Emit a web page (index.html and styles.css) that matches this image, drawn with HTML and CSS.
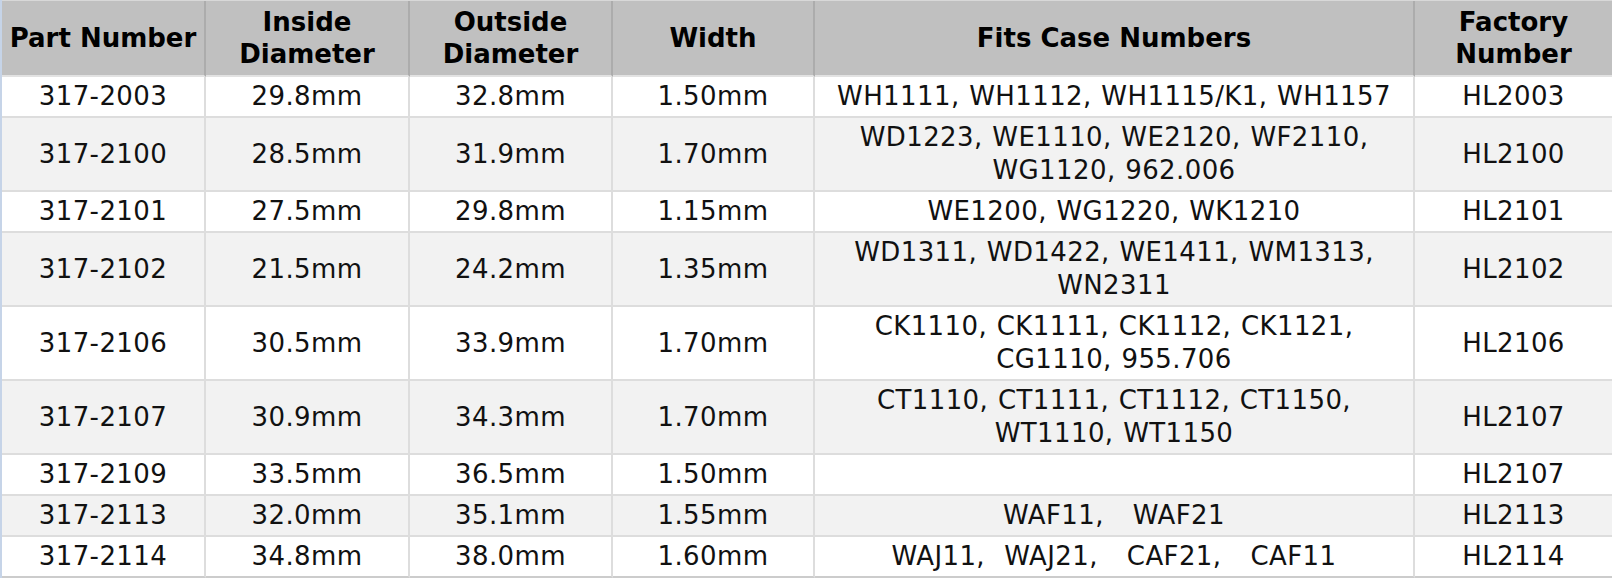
FILE: index.html
```html
<!DOCTYPE html>
<html>
<head>
<meta charset="utf-8">
<link rel="stylesheet" href="styles.css">
</head>
<body>
<div class="frame">
<table class="parts">
  <thead>
    <tr>
      <th class="c1">Part Number</th>
      <th class="c2">Inside<br>Diameter</th>
      <th class="c3">Outside<br>Diameter</th>
      <th class="c4">Width</th>
      <th class="c5">Fits Case Numbers</th>
      <th class="c6">Factory<br>Number</th>
    </tr>
  </thead>
  <tbody>
    <tr><td>317-2003</td><td>29.8mm</td><td>32.8mm</td><td>1.50mm</td><td>WH1111, WH1112, WH1115/K1, WH1157</td><td>HL2003</td></tr>
    <tr><td>317-2100</td><td>28.5mm</td><td>31.9mm</td><td>1.70mm</td><td>WD1223, WE1110, WE2120, WF2110,<br>WG1120, 962.006</td><td>HL2100</td></tr>
    <tr><td>317-2101</td><td>27.5mm</td><td>29.8mm</td><td>1.15mm</td><td>WE1200, WG1220, WK1210</td><td>HL2101</td></tr>
    <tr><td>317-2102</td><td>21.5mm</td><td>24.2mm</td><td>1.35mm</td><td>WD1311, WD1422, WE1411, WM1313,<br>WN2311</td><td>HL2102</td></tr>
    <tr><td>317-2106</td><td>30.5mm</td><td>33.9mm</td><td>1.70mm</td><td>CK1110, CK1111, CK1112, CK1121,<br>CG1110, 955.706</td><td>HL2106</td></tr>
    <tr><td>317-2107</td><td>30.9mm</td><td>34.3mm</td><td>1.70mm</td><td>CT1110, CT1111, CT1112, CT1150,<br>WT1110, WT1150</td><td>HL2107</td></tr>
    <tr><td>317-2109</td><td>33.5mm</td><td>36.5mm</td><td>1.50mm</td><td></td><td>HL2107</td></tr>
    <tr><td>317-2113</td><td>32.0mm</td><td>35.1mm</td><td>1.55mm</td><td>WAF11,&nbsp;&nbsp; WAF21</td><td>HL2113</td></tr>
    <tr><td>317-2114</td><td>34.8mm</td><td>38.0mm</td><td>1.60mm</td><td>WAJ11,&nbsp; WAJ21,&nbsp;&nbsp; CAF21,&nbsp;&nbsp; CAF11</td><td>HL2114</td></tr>
  </tbody>
</table>
</div>
</body>
</html>
```

FILE: styles.css
```css
html, body {
  margin: 0;
  padding: 0;
  background: #ffffff;
}

.frame {
  border-left: 2px solid #c6d4e8;
  width: 1610px;
  overflow: hidden;
}

.parts {
  border-collapse: separate;
  border-spacing: 0;
  table-layout: fixed;
  width: 1610px;
  font-family: "DejaVu Sans", Verdana, sans-serif;
  color: #111111;
  border-top: 1px solid #d8d8d8;
}

.parts th,
.parts td {
  box-sizing: border-box;
  text-align: center;
  vertical-align: middle;
  border-right: 2px solid #dddddd;
  border-bottom: 2px solid #dddddd;
}

.parts th {
  background: #c0c0c0;
  color: #000000;
  font-weight: bold;
  font-size: 26px;
  line-height: 32px;
  padding: 5px 2px;
  border-right-color: #acacac;
  border-bottom-color: #e2e2e2;
}

.parts td {
  font-size: 26px;
  line-height: 33px;
  letter-spacing: 0.4px;
  word-spacing: 1px;
  padding: 3px 2px;
}

.parts tbody tr:nth-child(even) td {
  background: #f2f2f2;
}

.parts tbody tr:last-child td {
  border-bottom-color: #cccccc;
}

.parts th:last-child,
.parts td:last-child {
  border-right: none;
}

.c1 { width: 204px; }
.c2 { width: 204px; }
.c3 { width: 203px; }
.c4 { width: 202px; }
.c5 { width: 600px; }
.c6 { width: 197px; }
```
